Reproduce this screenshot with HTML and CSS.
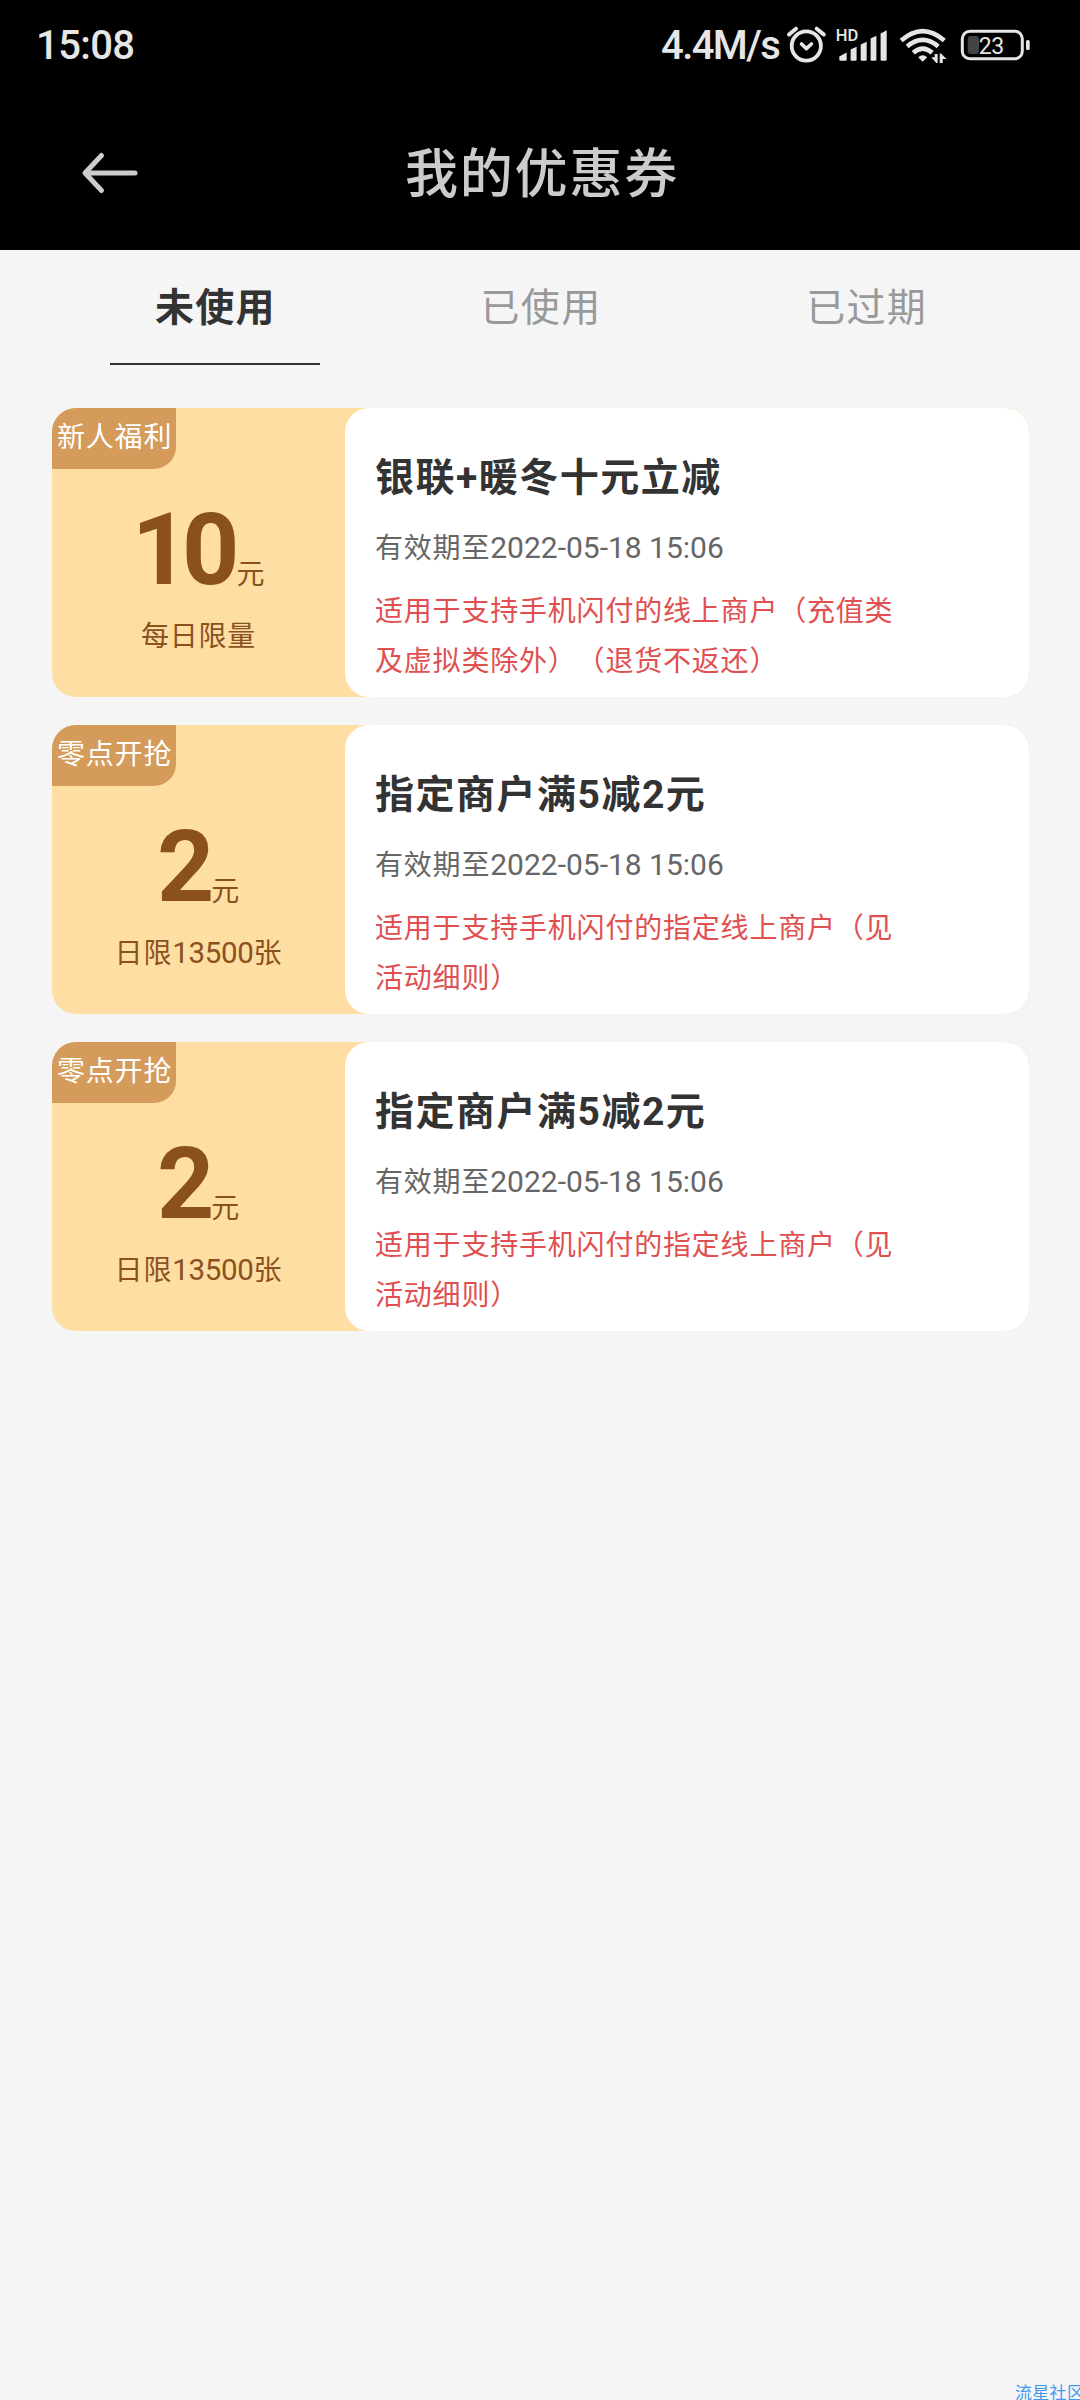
FILE: index.html
```html
<!DOCTYPE html>
<html lang="zh-CN">
<head>
<meta charset="UTF-8">
<title>我的优惠券</title>
<link rel="stylesheet" href="styles.css">
</head>
<body>
<div class="screen">
  <header class="top">
    <div class="status">
      <span class="clock">15:08</span>
      <div class="indicators">
        <span class="speed">4.4M/s</span>
        <svg class="icon" width="50" height="88" viewBox="784 0 50 88" fill="none" stroke="#e6e6e6" stroke-linecap="round" stroke-linejoin="round">
          <circle cx="806.3" cy="46" r="14.6" stroke-width="3.8"/>
          <path d="M789 34.5 796 28.7M823.8 34.5 816.7 28.7" stroke-width="4"/>
          <path d="M801.5 44 806.4 48.6 811.4 44" stroke-width="3.6"/>
        </svg>
        <svg class="icon" width="60" height="88" viewBox="834 0 60 88" fill="#e6e6e6">
          <text class="hd" x="835.8" y="41">HD</text>
          <path d="M839.3 56.5 846.7 52.5V59.5Q846.7 60.8 845.5 60.8H840.5Q839.3 60.8 839.3 59.5Z"/>
          <path d="M850.6 49.5 856.6 46.8V59.5Q856.6 60.8 855.4 60.8H851.8Q850.6 60.8 850.6 59.5Z"/>
          <path d="M860.7 44.5 866.7 41.8V59.5Q866.7 60.8 865.5 60.8H861.9Q860.7 60.8 860.7 59.5Z"/>
          <path d="M870.6 38.5 876.4 35.8V59.5Q876.4 60.8 875.2 60.8H871.8Q870.6 60.8 870.6 59.5Z"/>
          <path d="M880.6 33.5 886.7 30.3V59.5Q886.7 60.8 885.5 60.8H881.8Q880.6 60.8 880.6 59.5Z"/>
        </svg>
        <svg class="icon" width="60" height="88" viewBox="894 0 60 88" fill="none" stroke="#e6e6e6">
          <path d="M901.2 40.5Q922.7 21.8 944.3 40.5M907.2 46.5Q922.7 33.4 938.2 46.5M913.2 52.8Q922.7 44.4 932.2 52.8" stroke-width="4.6"/>
          <path d="M918.2 57.3Q922.7 53 927.2 57.3L922.7 61.8Z" fill="#e6e6e6" stroke="none"/>
          <path d="M931.3 57.3H934.7V54H937.6V63H936.3ZM939.7 53.6H941L946.6 59H942.7V63H939.7Z" fill="#e6e6e6" stroke="none"/>
        </svg>
        <svg class="icon" width="80" height="88" viewBox="954 0 80 88">
          <rect x="962.3" y="31.3" width="60" height="27.4" rx="7.5" fill="none" stroke="#e6e6e6" stroke-width="3"/>
          <rect x="967.7" y="36" width="11.3" height="18" rx="3" fill="#444"/>
          <rect x="1026" y="40" width="3.7" height="10" rx="1.5" fill="#e6e6e6"/>
          <text class="level" x="978.8" y="53.8" fill="#e6e6e6">23</text>
        </svg>
      </div>
    </div>
    <div class="nav">
      <svg class="back" width="60" height="44" viewBox="0 0 60 44" fill="none" stroke="#ccc" stroke-width="5" stroke-linecap="round" stroke-linejoin="round"><path d="M55 22H5.5M21.5 4.5 5 22 21.5 39.5"/></svg>
      <h1 class="title">我的优惠券</h1>
    </div>
  </header>

  <nav class="tabs">
    <span class="tab active">未使用</span>
    <span class="tab">已使用</span>
    <span class="tab">已过期</span>
  </nav>

  <main class="list">
    <article class="coupon">
      <div class="value">
        <span class="tag">新人福利</span>
        <div class="amount"><b class="number">10</b><span class="unit">元</span></div>
        <div class="limit">每日限量</div>
      </div>
      <div class="info">
        <h2 class="name">银联+暖冬十元立减</h2>
        <p class="expiry">有效期至<span class="date">2022-05-18 15:06</span></p>
        <p class="terms">适用于支持手机闪付的线上商户（充值类<br>及虚拟类除外）（退货不返还）</p>
      </div>
    </article>
    <article class="coupon">
      <div class="value">
        <span class="tag">零点开抢</span>
        <div class="amount"><b class="number">2</b><span class="unit">元</span></div>
        <div class="limit">日限<span class="count">13500</span>张</div>
      </div>
      <div class="info">
        <h2 class="name">指定商户满5减2元</h2>
        <p class="expiry">有效期至<span class="date">2022-05-18 15:06</span></p>
        <p class="terms">适用于支持手机闪付的指定线上商户（见<br>活动细则）</p>
      </div>
    </article>
    <article class="coupon">
      <div class="value">
        <span class="tag">零点开抢</span>
        <div class="amount"><b class="number">2</b><span class="unit">元</span></div>
        <div class="limit">日限<span class="count">13500</span>张</div>
      </div>
      <div class="info">
        <h2 class="name">指定商户满5减2元</h2>
        <p class="expiry">有效期至<span class="date">2022-05-18 15:06</span></p>
        <p class="terms">适用于支持手机闪付的指定线上商户（见<br>活动细则）</p>
      </div>
    </article>
  </main>

  <footer class="watermark">流星社区</footer>
</div>
</body>
</html>
```
FILE: styles.css
```css
* { box-sizing: border-box; margin: 0; padding: 0; }

body {
  background: #f5f5f5;
  font-family: Roboto, "Noto Sans CJK SC", sans-serif;
  text-spacing-trim: space-all;
}

.screen {
  width: 1080px;
  height: 2400px;
  display: flex;
  flex-direction: column;
  overflow: hidden;
  white-space: nowrap;
}

.top { height: 250px; background: #000; }

.status {
  height: 88px;
  padding: 0 46px 0 36px;
  display: flex;
  justify-content: space-between;
  color: #e6e6e6;
  font-size: 40px;
  font-weight: 500;
  line-height: 92px;
}
.clock { letter-spacing: -0.6px; }
.indicators { display: flex; }
.speed { width: 123px; letter-spacing: -1.6px; }
.icon { display: block; }
.hd { font-size: 16.5px; font-weight: 500; }
.level { font-size: 23px; font-weight: 400; letter-spacing: -0.4px; }

.nav {
  height: 162px;
  padding: 3px 76px 0 80px;
  display: grid;
  grid-template-columns: 60px 1fr 60px;
}
.back { margin-top: 60px; }
.title {
  text-align: center;
  color: #ccc;
  font-size: 53px;
  font-weight: 500;
  letter-spacing: 1.8px;
  line-height: 168px;
}

.tabs {
  height: 115px;
  margin: 0 51px 0 52px;
  display: grid;
  grid-template-columns: repeat(3, 1fr);
  justify-items: center;
  align-items: start;
}
.tab {
  width: 210px;
  height: 115px;
  padding-left: 1px;
  text-align: center;
  color: #999;
  font-size: 39px;
  letter-spacing: 1.3px;
  line-height: 116px;
}
.tab.active {
  color: #333;
  font-weight: 700;
  border-bottom: 2px solid #333;
}

.list {
  flex: 1;
  padding: 43px 51px 0 52px;
  display: flex;
  flex-direction: column;
  gap: 28px;
}

.coupon {
  height: 289px;
  display: flex;
  background: #ffdea3;
  border-radius: 24px;
  overflow: hidden;
}

.value {
  width: 293px;
  display: flex;
  flex-direction: column;
  align-items: center;
  color: #8a511f;
  font-size: 28px;
  letter-spacing: 0.8px;
}
.tag {
  align-self: flex-start;
  width: 124px;
  height: 61px;
  padding-left: 5px;
  background: #d49b5b;
  border-radius: 0 0 22px 0;
  color: #fff;
  line-height: 60px;
}
.amount { height: 134px; line-height: 162px; }
.number { font-size: 100px; letter-spacing: -7px; }
.unit { margin-left: 4px; }
.limit { line-height: 67px; }
.count { font-size: 29.5px; letter-spacing: -0.3px; }

.info {
  flex: 1;
  padding: 40px 30px 0;
  background: #fff;
  border-radius: 24px;
}
.name {
  color: #333;
  font-size: 39px;
  font-weight: 700;
  letter-spacing: 1.5px;
  line-height: 60px;
}
.expiry {
  margin-top: 10px;
  color: #666;
  font-size: 28px;
  letter-spacing: 0.8px;
  line-height: 60px;
}
.date { font-size: 30px; letter-spacing: 0; }
.terms {
  margin-top: 8px;
  color: #e05050;
  font-size: 28px;
  letter-spacing: 0.8px;
  line-height: 50px;
}

.watermark {
  height: 18px;
  margin-left: 1015px;
  color: #3f9af0;
  font-size: 17px;
  letter-spacing: 0.3px;
  line-height: 22px;
}
```
